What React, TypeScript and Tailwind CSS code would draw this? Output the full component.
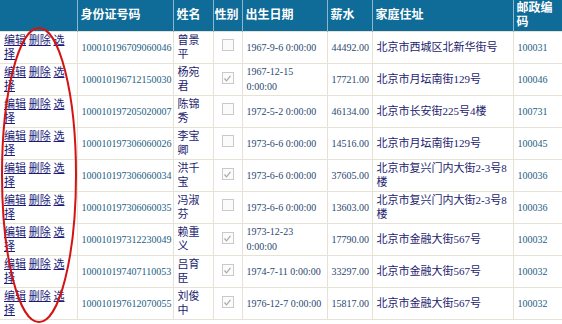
import React from 'react'

// Employee list grid with edit/delete/select links, red ellipse annotation on the action column

const rows = [
  { id: '100010196709060046', name: '曾景平', sex: false, dob: '1967-9-6 0:00:00', pay: '44492.00', addr: '北京市西城区北新华街号', zip: '100031' },
  { id: '100010196712150030', name: '杨宛君', sex: true, dob: '1967-12-15 0:00:00', pay: '17721.00', addr: '北京市月坛南街129号', zip: '100046' },
  { id: '100010197205020007', name: '陈锦秀', sex: false, dob: '1972-5-2 0:00:00', pay: '46134.00', addr: '北京市长安街225号4楼', zip: '100731' },
  { id: '100010197306060026', name: '李宝卿', sex: false, dob: '1973-6-6 0:00:00', pay: '14516.00', addr: '北京市月坛南街129号', zip: '100045' },
  { id: '100010197306060034', name: '洪千宝', sex: true, dob: '1973-6-6 0:00:00', pay: '37605.00', addr: '北京市复兴门内大街2-3号8楼', zip: '100036' },
  { id: '100010197306060035', name: '冯淑芬', sex: false, dob: '1973-6-6 0:00:00', pay: '13603.00', addr: '北京市复兴门内大街2-3号8楼', zip: '100036' },
  { id: '100010197312230049', name: '赖重义', sex: true, dob: '1973-12-23 0:00:00', pay: '17790.00', addr: '北京市金融大街567号', zip: '100032' },
  { id: '100010197407110053', name: '吕育臣', sex: true, dob: '1974-7-11 0:00:00', pay: '33297.00', addr: '北京市金融大街567号', zip: '100032' },
  { id: '100010197612070055', name: '刘俊中', sex: true, dob: '1976-12-7 0:00:00', pay: '15817.00', addr: '北京市金融大街567号', zip: '100032' },
]

const Check = ({ on }: { on: boolean }) => (
  <span className="inline-flex w-[12px] h-[12px] border border-[#c9c9c9] bg-[#fbfbfb] items-center justify-center">
    {on && (
      <svg width="9" height="9" viewBox="0 0 9 9">
        <path d="M1.5 4.5 L3.5 6.8 L7.5 1.8" fill="none" stroke="#a8a8a8" strokeWidth="1.2" />
      </svg>
    )}
  </span>
)

export default function App() {
  const th = 'text-left align-middle px-[3px] text-white font-bold text-[12px] leading-[14px] border-x border-[#8fb5cc]'
  const td = 'align-middle px-[4px] border border-[#e6e2d6] h-[32px]'
  const num = ' text-[10px] px-[3px]'
  return (
    <div className="relative w-[562px] h-[324px] overflow-hidden bg-white" style={{ fontFamily: '"Liberation Serif", "Noto Sans CJK SC", serif' }}>
      <table className="table-fixed border-collapse w-[562px]">
        <colgroup>
          <col className="w-[77px]" />
          <col className="w-[96px]" />
          <col className="w-[40px]" />
          <col className="w-[29px]" />
          <col className="w-[85px]" />
          <col className="w-[45px]" />
          <col className="w-[141px]" />
          <col className="w-[49px]" />
        </colgroup>
        <thead>
          <tr className="bg-[#0f6b98] h-[31px]">
            <th className="border-l-0 border-r border-[#8fb5cc]"></th>
            <th className={th}>身份证号码</th>
            <th className={th}>姓名</th>
            <th className={th + ' !px-[1px] whitespace-nowrap'}>性别</th>
            <th className={th}>出生日期</th>
            <th className={th}>薪水</th>
            <th className={th}>家庭住址</th>
            <th className={th + ' border-r-0'}>邮政编码</th>
          </tr>
        </thead>
        <tbody className="text-[11px] leading-[15px]">
          {rows.map(r => (
            <tr key={r.id}>
              <td className={td + ' border-l-0 text-[#1c1c78] leading-[14px]'}>
                <a className="underline">编辑</a> <a className="underline">删除</a> <a className="underline">选择</a>
              </td>
              <td className={td + ' text-[#235e80]' + num}>{r.id}</td>
              <td className={td + ' text-[#1c1c6e] leading-[14px]'}>{r.name}</td>
              <td className={td + ' text-center'}>
                <Check on={r.sex} />
              </td>
              <td className={td + ' text-[#2a4870]' + num}>{r.dob}</td>
              <td className={td + ' text-[#2a4870]' + num}>{r.pay}</td>
              <td className={td + ' text-[#1c1c6e] px-[3px] leading-[14px]'}>{r.addr}</td>
              <td className={td + ' border-r-0 text-[#235e80]' + num}>{r.zip}</td>
            </tr>
          ))}
        </tbody>
      </table>
      <svg className="absolute left-0 top-0 pointer-events-none" width="562" height="324">
        <ellipse cx="39" cy="175" rx="37" ry="147" fill="none" stroke="#d41414" strokeWidth="2" />
      </svg>
    </div>
  )
}
